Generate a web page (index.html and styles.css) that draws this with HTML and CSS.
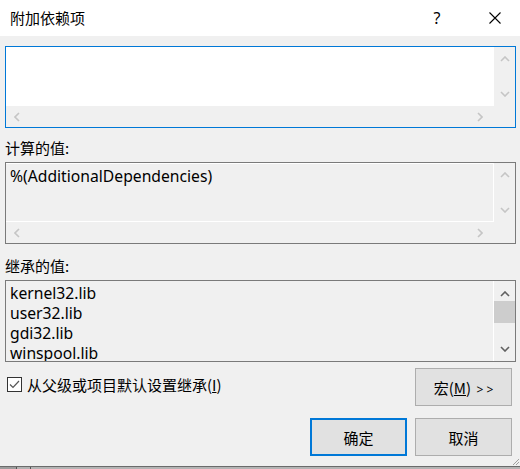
FILE: index.html
```html
<!DOCTYPE html>
<html lang="zh-CN">
<head>
<meta charset="utf-8">
<title>附加依赖项</title>
<link rel="stylesheet" href="styles.css">
</head>
<body>
<div class="window">
  <div class="titlebar">
    <div class="title">附加依赖项</div>
    <div class="tb-help">?</div>
    <div class="tb-close">
      <svg width="12" height="12" viewBox="0 0 12 12"><path d="M0.5 0.5 L11.5 11.5 M11.5 0.5 L0.5 11.5" stroke="#000" stroke-width="1.1" fill="none"/></svg>
    </div>
  </div>

  <div class="main">
    <div class="box box-edit">
      <div class="box-content white"></div>
      <div class="vscroll">
        <svg class="arr" width="10" height="6" viewBox="0 0 10 6"><polyline points="1,5 5,1 9,5" stroke="#c5c5c5" stroke-width="1.6" fill="none"/></svg>
        <svg class="arr" width="10" height="6" viewBox="0 0 10 6"><polyline points="1,1 5,5 9,1" stroke="#c5c5c5" stroke-width="1.6" fill="none"/></svg>
      </div>
      <div class="hscroll">
        <svg class="arr" width="6" height="10" viewBox="0 0 6 10"><polyline points="5,1 1,5 5,9" stroke="#c5c5c5" stroke-width="1.6" fill="none"/></svg>
        <svg class="arr" width="6" height="10" viewBox="0 0 6 10"><polyline points="1,1 5,5 1,9" stroke="#c5c5c5" stroke-width="1.6" fill="none"/></svg>
      </div>
      <div class="corner"></div>
    </div>

    <div class="label label-1">计算的值:</div>
    <div class="box box-ro">
      <div class="box-content ro-lines"><div class="text">%(AdditionalDependencies)</div></div>
      <div class="vscroll">
        <svg class="arr" width="10" height="6" viewBox="0 0 10 6"><polyline points="1,5 5,1 9,5" stroke="#c5c5c5" stroke-width="1.6" fill="none"/></svg>
        <svg class="arr" width="10" height="6" viewBox="0 0 10 6"><polyline points="1,1 5,5 9,1" stroke="#c5c5c5" stroke-width="1.6" fill="none"/></svg>
      </div>
      <div class="hscroll">
        <svg class="arr" width="6" height="10" viewBox="0 0 6 10"><polyline points="5,1 1,5 5,9" stroke="#c5c5c5" stroke-width="1.6" fill="none"/></svg>
        <svg class="arr" width="6" height="10" viewBox="0 0 6 10"><polyline points="1,1 5,5 1,9" stroke="#c5c5c5" stroke-width="1.6" fill="none"/></svg>
      </div>
      <div class="corner"></div>
    </div>

    <div class="label label-2">继承的值:</div>
    <div class="box box-list">
      <div class="box-content list-lines">
        <div class="line">kernel32.lib</div>
        <div class="line">user32.lib</div>
        <div class="line">gdi32.lib</div>
        <div class="line">winspool.lib</div>
      </div>
      <div class="vscroll vscroll-active">
        <svg class="arr" width="10" height="6" viewBox="0 0 10 6"><polyline points="1,5 5,1 9,5" stroke="#606060" stroke-width="1.6" fill="none"/></svg>
        <div class="track"><div class="thumb"></div></div>
        <svg class="arr" width="10" height="6" viewBox="0 0 10 6"><polyline points="1,1 5,5 9,1" stroke="#606060" stroke-width="1.6" fill="none"/></svg>
      </div>
    </div>

    <div class="options">
      <label class="check">
        <span class="checkbox">
          <svg width="13" height="13" viewBox="0 0 13 13"><polyline points="2,6.5 5,9.5 11,3" stroke="#555" stroke-width="1.2" fill="none"/></svg>
        </span>
        <span class="check-text">从父级或项目默认设置继承(<u>I</u>)</span>
      </label>
      <button class="btn">宏(<u>M</u>) <span class="chev">&gt; &gt;</span></button>
    </div>

    <div class="actions">
      <button class="btn btn-default">确定</button>
      <button class="btn">取消</button>
    </div>
  </div>

  <div class="bottom-strip">
    <span class="seg seg-a"></span>
    <span class="seg seg-b"></span>
    <span class="seg seg-c"></span>
  </div>
  <svg class="grip" width="8" height="8" viewBox="0 0 8 8">
    <path d="M7 1 L1 7 M7 4 L4 7" stroke="#a0a0a0" stroke-width="1" fill="none"/>
  </svg>
</div>
</body>
</html>
```

FILE: styles.css
```css
* { box-sizing: border-box; }

html, body {
  margin: 0;
  padding: 0;
}

body {
  width: 520px;
  height: 469px;
  overflow: hidden;
  background: #f0f0f0;
  font-family: "Noto Sans", "Noto Sans CJK SC", sans-serif;
  font-size: 15px;
  color: #000;
}

.window {
  position: relative;
  width: 520px;
  height: 469px;
  display: flex;
  flex-direction: column;
}

.titlebar {
  height: 36px;
  background: #fff;
  display: flex;
  align-items: center;
}

.title {
  flex: 1;
  padding-left: 10px;
  font-family: "Noto Sans CJK SC", sans-serif;
  font-size: 15px;
  line-height: 20px;
}

.tb-help {
  width: 66px;
  text-align: center;
  font-size: 16px;
  line-height: 20px;
}

.tb-close {
  width: 50px;
  height: 36px;
  display: flex;
  align-items: center;
  justify-content: center;
}

.main {
  flex: 1;
  display: flex;
  flex-direction: column;
  padding: 10px 4px 0 5px;
}

.box {
  height: 82px;
  display: grid;
  grid-template-columns: 1fr 21px;
  grid-template-rows: 1fr 21px;
  border: 1px solid #7a7a7a;
}

.box-edit {
  border-color: #0078d7;
  background: #f0f0f0;
}

.box-content {
  min-width: 0;
  overflow: hidden;
}

.white {
  background: #fff;
}

.ro-lines {
  border-top: 1px solid #fff;
  border-right: 1px solid #fff;
  border-bottom: 1px solid #fff;
  padding: 2px 0 0 4px;
}

.text {
  font-size: 15.7px;
  line-height: 20px;
  white-space: nowrap;
}

.vscroll {
  display: flex;
  flex-direction: column;
  align-items: center;
  justify-content: space-between;
  padding: 9px 0 9px 1px;
}

.hscroll {
  display: flex;
  align-items: center;
  justify-content: space-between;
  padding: 0 11px 0 8px;
}

.box-list {
  grid-template-rows: 1fr;
}

.list-lines {
  border-right: 1px solid #fff;
  padding: 2px 0 0 4px;
}

.line {
  font-size: 15.7px;
  line-height: 20px;
  white-space: nowrap;
}

.vscroll-active {
  padding: 10px 0 9px 0;
}

.track {
  flex: 1;
  width: 100%;
  padding-top: 4px;
}

.thumb {
  height: 22px;
  background: #cdcdcd;
}

.label {
  font-family: "Noto Sans CJK SC", sans-serif;
  line-height: 20px;
}

.label-1 { padding: 10px 0 4px; }
.label-2 { padding: 12px 0 4px; }

.options {
  display: flex;
  justify-content: space-between;
  align-items: flex-start;
  margin-top: 6px;
  padding-right: 4px;
}

.check {
  display: flex;
  align-items: center;
  padding: 5px 0 0 2px;
  font-family: "Noto Sans CJK SC", sans-serif;
}

.checkbox {
  width: 15px;
  height: 15px;
  border: 1px solid #333;
  background: #fff;
  display: flex;
  align-items: center;
  justify-content: center;
  margin-right: 5px;
}

.check-text {
  line-height: 20px;
  padding-top: 2px;
}

.btn {
  width: 97px;
  height: 38px;
  background: #e1e1e1;
  border: 1px solid #adadad;
  font-family: "Noto Sans CJK SC", sans-serif;
  font-size: 15px;
  color: #000;
  padding: 0;
  margin: 0;
}

.chev {
  font-family: "Noto Sans", sans-serif;
  font-size: 12px;
  margin-left: 2px;
}

.actions {
  display: flex;
  justify-content: flex-end;
  gap: 8px;
  margin-top: 12px;
  padding-right: 4px;
}

.btn-default {
  border: 2px solid #0078d7;
}

.bottom-strip {
  margin-top: 10px;
  height: 3px;
  border-top: 1px solid #6b6b6b;
  display: flex;
}

.seg { height: 2px; }
.seg-a { width: 17px; background: #9c9c9c; border-right: 1px solid #555; }
.seg-b { width: 14px; background: #b2b2b2; border-right: 1px solid #555; }
.seg-c { flex: 1; background: #b4b4b4; }

.grip {
  position: absolute;
  right: 0;
  bottom: 3px;
}
```
